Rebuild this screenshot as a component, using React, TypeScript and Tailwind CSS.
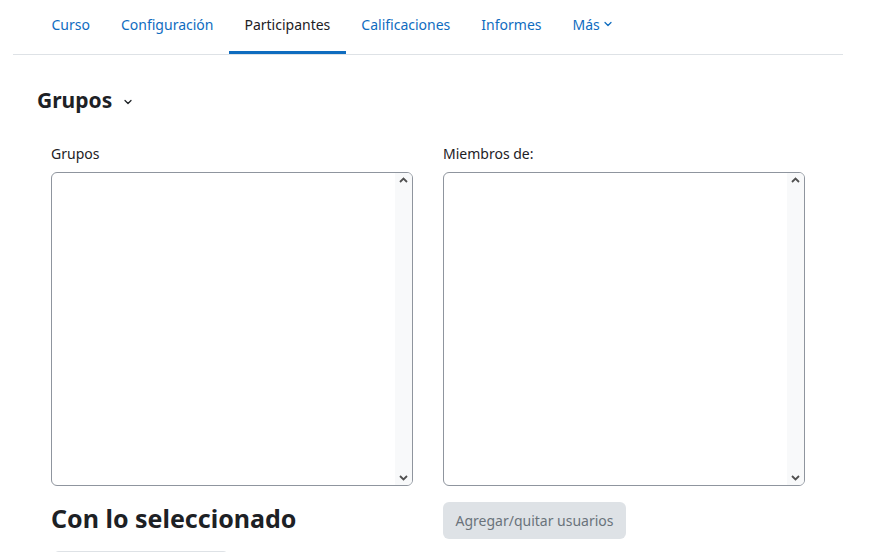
import { ChevronDown } from 'lucide-react';

const TABS = ['Curso', 'Configuración', 'Participantes', 'Calificaciones', 'Informes'];

const ListBox = () => (
	<div className="flex h-[314px] w-[362px] overflow-hidden rounded-[6px] border border-[#8f959e] bg-white">
		<div className="flex-1" />
		<div className="flex w-[17px] flex-col items-center justify-between bg-[#f8f9fa] py-[4px]">
			<svg width="9" height="6" viewBox="0 0 9 6">
				<path d="M1 5 L4.5 1.5 L8 5" stroke="#505050" strokeWidth="1.8" fill="none" />
			</svg>
			<svg width="9" height="6" viewBox="0 0 9 6">
				<path d="M1 1 L4.5 4.5 L8 1" stroke="#505050" strokeWidth="1.8" fill="none" />
			</svg>
		</div>
	</div>
);

export default function App() {
	return (
		<div
			className="h-[552px] w-[882px] overflow-hidden bg-white text-[#1d2125]"
			style={{ fontFamily: '"Noto Sans", "Open Sans", sans-serif' }}
		>
			<nav className="ml-[13px] flex w-[830px] border-b border-[#dee2e6] pl-[23px] text-[14px]">
				{TABS.map((label) => (
					<a
						key={label}
						className={`flex h-[54px] items-center border-b-[3px] px-[15.5px] pb-[3px] ${
							label === 'Participantes'
								? 'border-[#0f6cbf] text-[#1d2125]'
								: 'border-transparent text-[#0f6cbf]'
						}`}
					>
						{label}
					</a>
				))}
				<a className="flex h-[54px] items-center gap-[2px] border-b-[3px] border-transparent px-[15.5px] pb-[3px] text-[#0f6cbf]">
					Más
					<ChevronDown size={12} strokeWidth={2.5} />
				</a>
			</nav>

			<div className="ml-[37px] mt-[30px] flex items-center gap-[10px]">
				<h2 className="text-[21px] font-bold">Grupos</h2>
				<ChevronDown size={12} strokeWidth={2.5} className="mt-[3px]" />
			</div>

			<div className="ml-[51px] mt-[26px] flex gap-[30px]">
				<div className="flex flex-col gap-[8px]">
					<label className="text-[14px]">Grupos</label>
					<ListBox />
					<h3 className="mt-[6px] text-[25px] font-bold">Con lo seleccionado</h3>
					<div className="ml-[2px] mt-[6px] h-[37px] w-[176px] rounded-[6px] bg-[#dee2e6]" />
				</div>
				<div className="flex flex-col gap-[8px]">
					<label className="text-[14px]">Miembros de:</label>
					<ListBox />
					<button className="mt-[8px] h-[37px] w-[183px] rounded-[6px] bg-[#dee2e6] text-[14px] text-[#6a737b]">
						Agregar/quitar usuarios
					</button>
				</div>
			</div>
		</div>
	);
}
